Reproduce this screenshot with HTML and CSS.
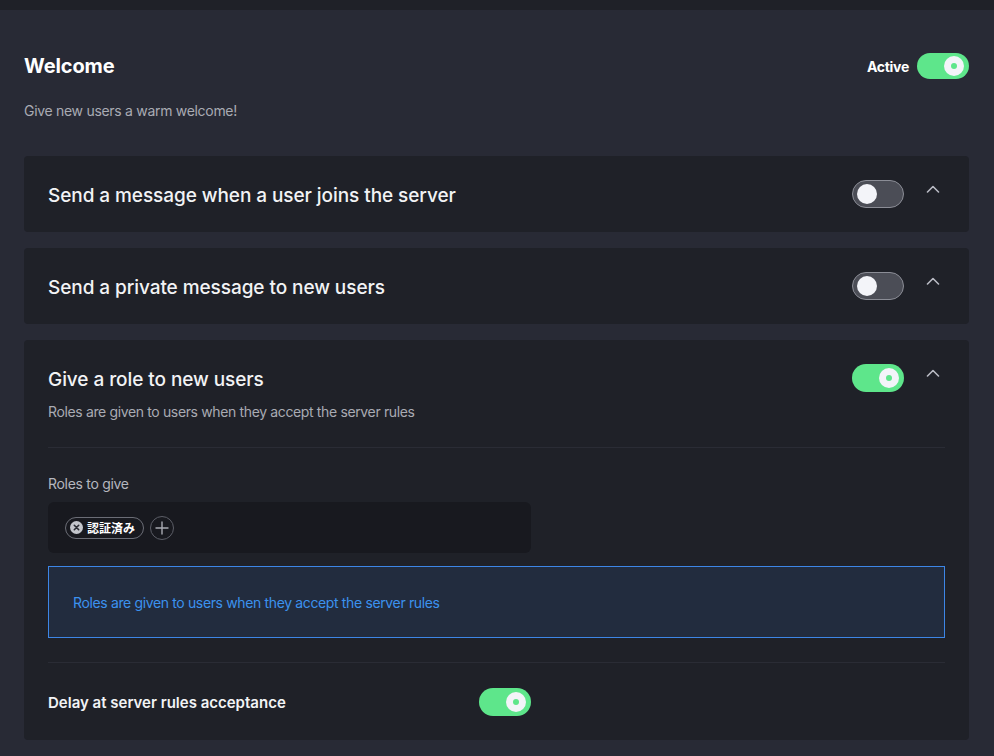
FILE: index.html
```html
<!DOCTYPE html>
<html>
<head>
<meta charset="utf-8">
<link rel="stylesheet" href="styles.css">
</head>
<body>
<div class="topbar"></div>
<main class="main">
  <header class="page-head">
    <h1 class="page-title">Welcome</h1>
    <div class="active-wrap">
      <span class="active-label">Active</span>
      <span class="toggle on"><span class="knob"></span></span>
    </div>
  </header>
  <p class="page-sub">Give new users a warm welcome!</p>

  <section class="card">
    <div class="card-head">
      <div class="card-text">
        <h2 class="card-title">Send a message when a user joins the server</h2>
      </div>
      <span class="toggle off"><span class="knob"></span></span>
      <svg class="chev" width="14" height="8" viewBox="0 0 14 8"><path d="M1.5 7 L7 1.5 L12.5 7" fill="none" stroke="#b9bbc4" stroke-width="1.6" stroke-linecap="round" stroke-linejoin="round"/></svg>
    </div>
  </section>

  <section class="card">
    <div class="card-head">
      <div class="card-text">
        <h2 class="card-title">Send a private message to new users</h2>
      </div>
      <span class="toggle off"><span class="knob"></span></span>
      <svg class="chev" width="14" height="8" viewBox="0 0 14 8"><path d="M1.5 7 L7 1.5 L12.5 7" fill="none" stroke="#b9bbc4" stroke-width="1.6" stroke-linecap="round" stroke-linejoin="round"/></svg>
    </div>
  </section>

  <section class="card card-open">
    <div class="card-head">
      <div class="card-text">
        <h2 class="card-title">Give a role to new users</h2>
        <p class="card-desc">Roles are given to users when they accept the server rules</p>
      </div>
      <span class="toggle on"><span class="knob"></span></span>
      <svg class="chev" width="14" height="8" viewBox="0 0 14 8"><path d="M1.5 7 L7 1.5 L12.5 7" fill="none" stroke="#b9bbc4" stroke-width="1.6" stroke-linecap="round" stroke-linejoin="round"/></svg>
    </div>
    <div class="card-body">
      <hr class="divider">
      <div class="field-label">Roles to give</div>
      <div class="roles-box">
        <span class="chip">
          <svg class="chip-x" width="13" height="13" viewBox="0 0 13 13"><circle cx="6.5" cy="6.5" r="6.5" fill="#c4c6cc"/><path d="M4.3 4.3 L8.7 8.7 M8.7 4.3 L4.3 8.7" stroke="#2a2c33" stroke-width="1.6" stroke-linecap="round"/></svg>
          <span class="chip-text">認証済み</span>
        </span>
        <span class="add-btn">
          <svg width="14" height="14" viewBox="0 0 14 14"><path d="M7 1 V13 M1 7 H13" stroke="#a8aab2" stroke-width="1.4" stroke-linecap="round"/></svg>
        </span>
      </div>
      <div class="info-box">Roles are given to users when they accept the server rules</div>
      <hr class="divider divider-2">
      <div class="delay-row">
        <span class="delay-label">Delay at server rules acceptance</span>
        <span class="toggle on"><span class="knob"></span></span>
      </div>
    </div>
  </section>
</main>
</body>
</html>
```
FILE: styles.css
```css
* { box-sizing: border-box; }
html, body { margin: 0; padding: 0; }
body {
  background: #282a35;
  font-family: Inter, "Noto Sans", "Noto Sans CJK JP", sans-serif;
  color: #f2f3f5;
  width: 994px;
  height: 756px;
  overflow: hidden;
}
.topbar {
  height: 10px;
  background: #1f2128;
}
.main {
  padding: 0 25px 0 24px;
}
.page-head {
  display: flex;
  align-items: center;
  justify-content: space-between;
  height: 32px;
  margin-top: 40px;
}
.page-title {
  margin: 0;
  font-size: 20px;
  font-weight: 700;
  letter-spacing: -0.1px;
  color: #ffffff;
}
.active-wrap {
  display: flex;
  align-items: center;
  gap: 8px;
}
.active-label {
  font-size: 14px;
  font-weight: 700;
  letter-spacing: -0.3px;
  color: #ffffff;
}
.page-sub {
  margin: 19px 0 35px;
  font-size: 14px;
  line-height: 20px;
  color: #a9abb3;
  letter-spacing: -0.3px;
}
.card {
  background: #1f2128;
  border-radius: 4px;
  margin-bottom: 16px;
}
.card-head {
  display: flex;
  align-items: flex-start;
  padding: 24px 24px 20px;
}
.card-text {
  flex: 1;
}
.card-title {
  margin: 0;
  font-size: 19px;
  font-weight: 500;
  line-height: 32px;
  letter-spacing: -0.07px;
  color: #f2f3f5;
}
.card-desc {
  margin: 6px 0 0;
  font-size: 14px;
  line-height: 20px;
  color: #a9abb3;
  letter-spacing: -0.36px;
}
.chev {
  margin: 5px 5px 0 22px;
}
.toggle {
  position: relative;
  display: inline-block;
  width: 52px;
  height: 28px;
  border-radius: 14px;
  flex: none;
}
.toggle.on {
  background: #5ee68b;
}
.toggle.off {
  background: #4b4d56;
  border: 1px solid #8b8d96;
}
.toggle .knob {
  position: absolute;
  top: 4px;
  width: 20px;
  height: 20px;
  border-radius: 50%;
  background: #f3f4f9;
}
.toggle.on .knob { right: 5px; }
.toggle.on .knob::after {
  content: "";
  position: absolute;
  left: 7px;
  top: 7px;
  width: 6px;
  height: 6px;
  border-radius: 50%;
  background: #5ee68b;
}
.toggle.off .knob { left: 4px; top: 3px; }
.active-wrap .toggle { height: 26px; }
.active-wrap .toggle .knob { top: 3px; }
.card-open .card-head {
  padding-bottom: 0;
}
.card-body {
  padding: 0 24px 24px;
}
.divider {
  border: 0;
  border-top: 1px solid #2a2c35;
  margin: 25px 0 0;
}
.field-label {
  margin-top: 26px;
  font-size: 14px;
  line-height: 20px;
  color: #b5b7bf;
  letter-spacing: -0.3px;
}
.roles-box {
  margin-top: 8px;
  width: 483px;
  height: 51px;
  background: #18191f;
  border-radius: 6px;
  display: flex;
  align-items: center;
  gap: 6px;
  padding: 0 17px;
}
.chip {
  display: inline-flex;
  align-items: center;
  gap: 4px;
  height: 22px;
  padding: 0 8px 0 4px;
  border: 1px solid #6b6d76;
  border-radius: 11px;
}
.chip-text {
  font-size: 12px;
  font-weight: 700;
  color: #ffffff;
  font-family: "Noto Sans CJK JP", sans-serif;
}
.add-btn {
  display: inline-flex;
  align-items: center;
  justify-content: center;
  width: 24px;
  height: 24px;
  border: 1px solid #5c5e67;
  border-radius: 50%;
}
.info-box {
  margin-top: 13px;
  height: 72px;
  border: 1px solid #3d86e6;
  background: #222c3e;
  display: flex;
  align-items: center;
  padding: 0 24px;
  font-size: 14px;
  color: #3c92ee;
  letter-spacing: -0.36px;
}
.divider-2 {
  margin-top: 24px;
}
.delay-row {
  display: flex;
  align-items: center;
  height: 28px;
  margin-top: 25px;
}
.delay-label {
  width: 431px;
  font-size: 15px;
  font-weight: 600;
  letter-spacing: 0px;
  color: #f2f3f5;
}
```
